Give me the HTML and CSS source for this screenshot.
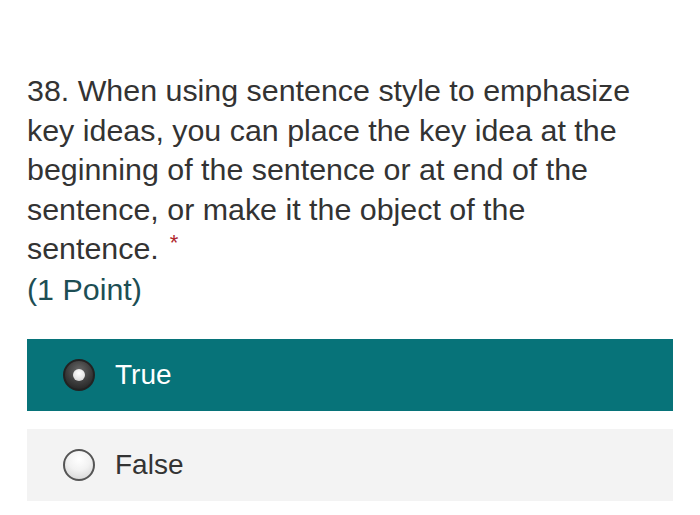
FILE: index.html
```html
<!DOCTYPE html>
<html>
<head>
<meta charset="utf-8">
<link rel="stylesheet" href="styles.css">
</head>
<body>
<div class="question">
  <div class="title">38. When using sentence style to emphasize key ideas, you can place the key idea at the beginning of the sentence or at end of the sentence, or make it the object of the sentence.<span class="req">*</span></div>
  <div class="points">(1 Point)</div>
  <div class="options">
    <div class="option selected">
      <span class="radio checked"><span class="dot"></span></span>
      <span class="label">True</span>
    </div>
    <div class="option">
      <span class="radio"></span>
      <span class="label">False</span>
    </div>
  </div>
</div>
</body>
</html>
```
FILE: styles.css
```css
html, body {
  margin: 0;
  padding: 0;
  background: #ffffff;
}
body {
  font-family: "Liberation Sans", Arial, sans-serif;
  color: #333333;
}
.question {
  padding: 71px 27px 0 27px;
}
.title {
  font-size: 30.4px;
  line-height: 39.5px;
  color: #333333;
  width: 620px;
}
.req {
  color: #b0272d;
  margin-left: 11px;
  font-size: 22px;
  line-height: 1;
  vertical-align: 9px;
}
.points {
  font-size: 30.4px;
  line-height: 40px;
  color: #1d4e54;
}
.options {
  margin-top: 30px;
  width: 646px;
  display: flex;
  flex-direction: column;
  gap: 18px;
}
.option {
  height: 72px;
  display: flex;
  align-items: center;
  background: #f3f3f3;
  padding-left: 36px;
}
.option.selected {
  background: #077379;
}
.label {
  font-size: 28px;
  margin-left: 20px;
  color: #333333;
}
.selected .label {
  color: #ffffff;
}
.radio {
  width: 28px;
  height: 28px;
  border-radius: 50%;
  border: 2px solid #555;
  background: radial-gradient(circle at 50% 30%, #ffffff 0%, #f2f2f2 45%, #cfcfcf 100%);
  display: flex;
  align-items: center;
  justify-content: center;
  box-sizing: content-box;
  flex: none;
}
.radio.checked {
  border-color: #222;
  background: radial-gradient(circle at 50% 35%, #6a6a6a 0%, #3a3a3a 55%, #1a1a1a 100%);
}
.dot {
  width: 12px;
  height: 12px;
  border-radius: 50%;
  background: radial-gradient(circle at 50% 35%, #ffffff 0%, #e4e4e4 60%, #bdbdbd 100%);
}
```
